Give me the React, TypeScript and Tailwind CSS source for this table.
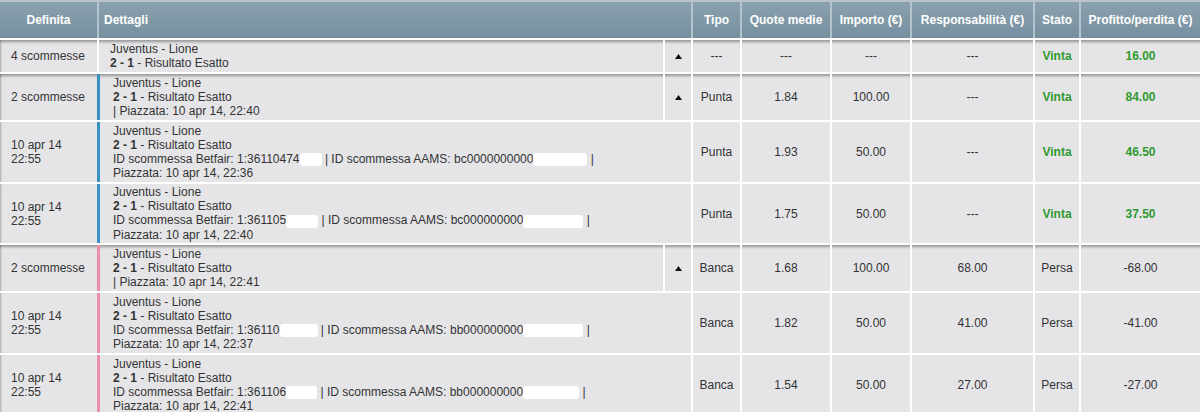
import React from "react";

type Row = {
  kind: "group" | "detail";
  accent?: "blue" | "pink" | null;
  def: string[];
  lines: React.ReactNode[];
  tipo: string;
  quote: string;
  importo: string;
  resp: string;
  stato: string;
  profit: string;
  win: boolean;
  h: string;
};

const Blob = ({ w }: { w: number }) => (
  <span
    className="inline-block h-[13px] bg-white rounded-[3px] align-middle"
    style={{ width: w }}
  />
);

const rows: Row[] = [
  {
    kind: "group",
    accent: null,
    def: ["4 scommesse"],
    lines: ["Juventus - Lione", <><b>2 - 1</b> - Risultato Esatto</>],
    tipo: "---",
    quote: "---",
    importo: "---",
    resp: "---",
    stato: "Vinta",
    profit: "16.00",
    win: true,
    h: "h-[32px]",
  },
  {
    kind: "group",
    accent: "blue",
    def: ["2 scommesse"],
    lines: ["Juventus - Lione", <><b>2 - 1</b> - Risultato Esatto</>, "| Piazzata: 10 apr 14, 22:40"],
    tipo: "Punta",
    quote: "1.84",
    importo: "100.00",
    resp: "---",
    stato: "Vinta",
    profit: "84.00",
    win: true,
    h: "h-[46px]",
  },
  {
    kind: "detail",
    accent: "blue",
    def: ["10 apr 14", "22:55"],
    lines: [
      "Juventus - Lione",
      <><b>2 - 1</b> - Risultato Esatto</>,
      <>ID scommessa Betfair: 1:36110474<Blob w={22} /> | ID scommessa AAMS: bc0000000000<Blob w={54} /> |</>,
      "Piazzata: 10 apr 14, 22:36",
    ],
    tipo: "Punta",
    quote: "1.93",
    importo: "50.00",
    resp: "---",
    stato: "Vinta",
    profit: "46.50",
    win: true,
    h: "h-[60px]",
  },
  {
    kind: "detail",
    accent: "blue",
    def: ["10 apr 14", "22:55"],
    lines: [
      "Juventus - Lione",
      <><b>2 - 1</b> - Risultato Esatto</>,
      <>ID scommessa Betfair: 1:361105<Blob w={32} /> | ID scommessa AAMS: bc000000000<Blob w={60} /> |</>,
      "Piazzata: 10 apr 14, 22:40",
    ],
    tipo: "Punta",
    quote: "1.75",
    importo: "50.00",
    resp: "---",
    stato: "Vinta",
    profit: "37.50",
    win: true,
    h: "h-[59px]",
  },
  {
    kind: "group",
    accent: "pink",
    def: ["2 scommesse"],
    lines: ["Juventus - Lione", <><b>2 - 1</b> - Risultato Esatto</>, "| Piazzata: 10 apr 14, 22:41"],
    tipo: "Banca",
    quote: "1.68",
    importo: "100.00",
    resp: "68.00",
    stato: "Persa",
    profit: "-68.00",
    win: false,
    h: "h-[46px]",
  },
  {
    kind: "detail",
    accent: "pink",
    def: ["10 apr 14", "22:55"],
    lines: [
      "Juventus - Lione",
      <><b>2 - 1</b> - Risultato Esatto</>,
      <>ID scommessa Betfair: 1:36110<Blob w={38} /> | ID scommessa AAMS: bb000000000<Blob w={60} /> |</>,
      "Piazzata: 10 apr 14, 22:37",
    ],
    tipo: "Banca",
    quote: "1.82",
    importo: "50.00",
    resp: "41.00",
    stato: "Persa",
    profit: "-41.00",
    win: false,
    h: "h-[60px]",
  },
  {
    kind: "detail",
    accent: "pink",
    def: ["10 apr 14", "22:55"],
    lines: [
      "Juventus - Lione",
      <><b>2 - 1</b> - Risultato Esatto</>,
      <>ID scommessa Betfair: 1:361106<Blob w={31} /> | ID scommessa AAMS: bb000000000<Blob w={56} /> |</>,
      "Piazzata: 10 apr 14, 22:41",
    ],
    tipo: "Banca",
    quote: "1.54",
    importo: "50.00",
    resp: "27.00",
    stato: "Persa",
    profit: "-27.00",
    win: false,
    h: "h-[60px]",
  },
];

const cols = "grid-cols-[97px_564px_26px_47px_88px_78px_121px_44px_119px]";

export default function App() {
  const hcell = "bg-gradient-to-b from-[#8aa1ae] to-[#7790a0] flex items-center justify-center";
  return (
    <div
      className="w-[1200px] h-[412px] overflow-hidden bg-white text-[12px] leading-[14px] text-[#333333]"
      style={{ fontFamily: '"Liberation Sans", Arial, sans-serif' }}
    >
      <div className="border-t-2 border-[#b9c3c9]">
        {/* header */}
        <div className={`grid ${cols} gap-x-[2px] h-[36px] bg-[#b3c4cd] text-white font-bold`}>
          <div className={hcell}>Definita</div>
          <div className={`${hcell} col-span-2 !justify-start pl-[5px]`}>Dettagli</div>
          <div className={hcell}>Tipo</div>
          <div className={hcell}>Quote medie</div>
          <div className={hcell}>Importo (€)</div>
          <div className={hcell}>Responsabilità (€)</div>
          <div className={hcell}>Stato</div>
          <div className={hcell}>Profitto/perdita (€)</div>
        </div>

        <div className="flex flex-col gap-y-[2px] pt-[2px]">
          {rows.map((r, i) => {
            const shadow =
              r.kind === "group" ? "shadow-[inset_0_4px_3px_-2px_rgba(0,0,0,0.35)]" : "";
            const cell = `bg-[#e5e5e8] ${shadow} flex items-center`;
            const accentCls =
              r.accent === "blue"
                ? "-ml-[2px] border-l-[3px] border-[#3a92c4] pl-[13px]"
                : r.accent === "pink"
                ? "-ml-[2px] border-l-[3px] border-[#ec8fab] pl-[13px]"
                : "pl-[11px]";
            const valCls = r.win ? "text-[#2e9a2e] font-bold" : "";
            return (
              <div key={i} className={`grid ${cols} gap-x-[2px] ${r.h}`}>
                <div
                  className={`bg-[#e5e5e8] flex items-center pl-[11px] ${
                    r.kind === "group"
                      ? "shadow-[inset_0_4px_3px_-2px_rgba(0,0,0,0.35),inset_2px_0_2px_-1px_rgba(0,0,0,0.25)]"
                      : "shadow-[inset_2px_0_2px_-1px_rgba(0,0,0,0.25)]"
                  }`}
                >
                  <div>
                    {r.def.map((d, j) => (
                      <div key={j}>{d}</div>
                    ))}
                  </div>
                </div>
                <div className={`${cell} ${accentCls} ${r.kind === "detail" ? "col-span-2" : ""}`}>
                  <div>
                    {r.lines.map((l, j) => (
                      <div key={j} className="whitespace-nowrap">{l}</div>
                    ))}
                  </div>
                </div>
                {r.kind === "group" && (
                  <div className={`${cell} justify-center`}>
                    <svg width="7" height="5" viewBox="0 0 7 5">
                      <path d="M3.5 0 L7 5 L0 5 Z" fill="#111" />
                    </svg>
                  </div>
                )}
                <div className={`${cell} justify-center`}>{r.tipo}</div>
                <div className={`${cell} justify-center`}>{r.quote}</div>
                <div className={`${cell} justify-center`}>{r.importo}</div>
                <div className={`${cell} justify-center`}>{r.resp}</div>
                <div className={`${cell} justify-center ${valCls}`}>{r.stato}</div>
                <div className={`${cell} justify-center ${valCls}`}>{r.profit}</div>
              </div>
            );
          })}
        </div>
      </div>
    </div>
  );
}
